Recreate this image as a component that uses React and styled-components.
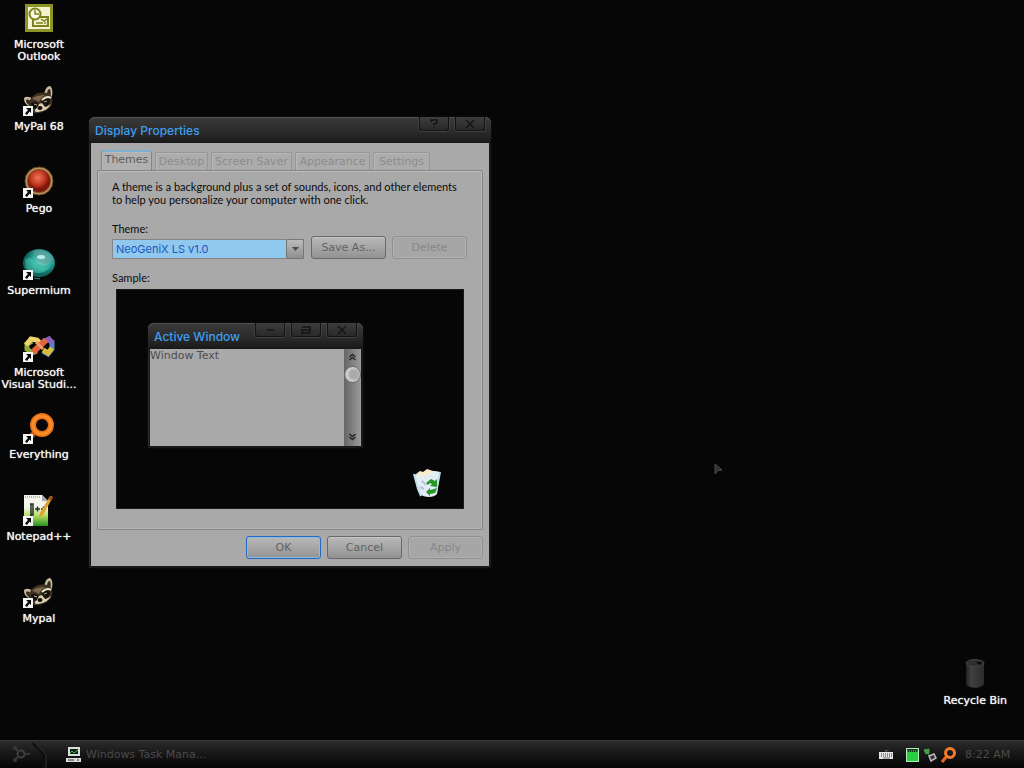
import React from "react";
import styled, { createGlobalStyle, css } from "styled-components";

const uiFont = `Inter, "DejaVu Sans", sans-serif`;
const wideFont = `"DejaVu Sans", Inter, sans-serif`;
const bodyFont = `Lato, Roboto, sans-serif`;

const Global = createGlobalStyle`
  *, *::before, *::after { box-sizing: border-box; }
  body { margin: 0; background: #060606; }
  button, select { margin: 0; font: inherit; }
  svg { display: block; }
`;

const Desktop = styled.div`
  position: relative;
  min-height: 100vh;
  display: flex;
  flex-direction: column;
  background: #060606;
  font-family: ${uiFont};
  overflow: hidden;
  cursor: default;
`;

const Workspace = styled.main`
  flex: 1;
  display: flex;
  justify-content: space-between;
  align-items: flex-end;
`;

const Shortcuts = styled.nav`
  align-self: flex-start;
  width: 78px;
  padding-top: 2px;
`;

const ShortcutLink = styled.a`
  display: flex;
  flex-direction: column;
  align-items: center;
  gap: 5px;
  height: ${(p) => (p.$last ? "auto" : "82px")};
  color: #f6f6f6;
  text-decoration: none;
  font-family: ${wideFont};
  font-size: 11px;
  line-height: 12px;
  text-align: center;
  text-shadow: 0 0 1px #f6f6f6;
  white-space: pre;
`;

const BinArea = styled.aside`
  padding: 0 17px 33px 0;
`;

/* ---- windows ---- */

const Frame = styled.section`
  position: absolute;
  left: ${(p) => p.$x}px;
  top: ${(p) => p.$y}px;
  width: ${(p) => p.$w}px;
  padding: 0 2px 2px;
  background: #191919;
  border-radius: 6px 6px 2px 2px;
  box-shadow: inset 0 1px #4c4c4c, inset 1px 0 #2b2b2b, 0 0 3px #161616;
`;

const TitleBar = styled.header`
  display: flex;
  justify-content: space-between;
  height: 26px;
  margin: 0 -2px;
  padding: 0 6px;
  border-radius: 6px 6px 0 0;
  background: linear-gradient(#3a3a3a, #2b2b2b 55%, #191919);
  box-shadow: inset 0 1px #505050;
`;

const Title = styled.h2`
  margin: 0;
  color: #3f9fee;
  font-family: ${uiFont};
  font-size: 12px;
  font-weight: 500;
  line-height: 28px;
  white-space: nowrap;
`;

const CaptionButtons = styled.div`
  display: flex;
  gap: 6px;
`;

const CaptionButton = styled.button`
  display: grid;
  place-items: center;
  width: 30px;
  height: 14px;
  padding: 0;
  border: 1px solid #121212;
  border-top: 0;
  border-radius: 0 0 3px 3px;
  background: linear-gradient(#3d3d3d, #292929);
  box-shadow: 0 1px #444, -1px 0 #414141, 1px 0 #414141;
`;

const Body = styled.div`
  padding: 7px 6px 7px;
  background: #a9a9a9;
`;

const Tabs = styled.div`
  display: flex;
  align-items: flex-end;
  gap: 3px;
  height: 20px;
  padding-left: 4px;
`;

const Tab = styled.button`
  width: ${(p) => p.$w}px;
  height: 18px;
  padding: 0;
  border: 1px solid #979797;
  border-bottom: 0;
  border-radius: 2px 2px 0 0;
  background: #acacac;
  box-shadow: inset 1px 1px #b8b8b8;
  color: #8c8c8c;
  font-family: ${wideFont};
  font-size: 11px;
  line-height: 16px;
  white-space: nowrap;
  ${(p) =>
    p.$active &&
    css`
      height: 20px;
      padding-bottom: 2px;
      border-color: #858585;
      border-top: 2px solid #7fb0d4;
      background: #b1b1b1;
      color: #5e5e5e;
    `}
`;

const Panel = styled.div`
  display: flex;
  flex-direction: column;
  padding: 9px 14px 20px;
  border: 1px solid #858585;
  border-radius: 2px;
  box-shadow: inset 1px 1px #bdbdbd, inset -1px -1px #b6b6b6;
  color: #0b0b0b;
  font-family: ${bodyFont};
  font-size: 11px;
  line-height: 13px;
`;

const Intro = styled.p`
  margin: 0 0 16px;
`;

const FieldLabel = styled.label`
  display: block;
  margin-bottom: 1px;
`;

const ThemeRow = styled.div`
  display: flex;
  align-items: flex-start;
  gap: 6px;
  margin-bottom: 12px;
`;

const SelectBox = styled.div`
  position: relative;
  width: 193px;
  height: 20px;
  margin-top: 3px;
`;

const Select = styled.select`
  appearance: none;
  width: 192px;
  height: 20px;
  padding: 0 20px 0 3px;
  border: 1px solid #858585;
  border-radius: 0;
  background: linear-gradient(90deg, #91c8ee 173px, #a9a9a9 173px);
  color: #1857c4;
  font-family: ${uiFont};
  font-size: 11px;
  line-height: 18px;
`;

const SelectArrow = styled.span`
  position: absolute;
  top: 0;
  right: 1px;
  display: grid;
  place-items: center;
  width: 18px;
  height: 20px;
  border: 1px solid #777;
  border-radius: 2px;
  background: linear-gradient(#bcbcbc, #8f8f8f);
  pointer-events: none;
`;

const Button = styled.button`
  width: 75px;
  height: 23px;
  padding: 0;
  border: 1px solid #696969;
  border-radius: 3px;
  background: linear-gradient(#b8b8b8, #a4a4a4 55%, #929292);
  box-shadow: inset 0 1px #c6c6c6;
  color: #626262;
  font-family: ${wideFont};
  font-size: 11px;
  line-height: 20px;
  ${(p) =>
    p.$primary &&
    css`
      border-color: #2468c4;
      box-shadow: inset 0 0 0 1px #8abbe3;
    `}
  &:disabled {
    border-color: #919191;
    background: #a6a6a6;
    box-shadow: inset 0 0 0 1px #b0b0b0;
    color: #868686;
  }
`;

const Preview = styled.div`
  position: relative;
  height: 220px;
  margin: 5px 4px 0;
  border: 1px solid #1b1b1b;
  background: #060606;
`;

const PreviewBin = styled.div`
  position: absolute;
  right: 20px;
  bottom: 9px;
`;

const PreviewBody = styled.div`
  display: flex;
  height: 97px;
  background: #a9a9a9;
`;

const PreviewText = styled.p`
  flex: 1;
  margin: 0;
  color: #4d4d4d;
  font-family: ${wideFont};
  font-size: 11px;
  line-height: 13px;
`;

const ScrollTrack = styled.div`
  display: flex;
  flex-direction: column;
  align-items: center;
  width: 17px;
  padding: 4px 0 5px;
  background: linear-gradient(90deg, #656565, #9b9b9b);
`;

const ScrollThumb = styled.span`
  width: 17px;
  height: 17px;
  margin: 5px 0 auto;
  border: 1px solid #6a6a6a;
  border-radius: 50%;
  background: radial-gradient(circle at 60% 50%, #aaa 35%, #d2d2d2 60%, #8b8b8b);
`;

const DialogActions = styled.footer`
  display: flex;
  justify-content: flex-end;
  gap: 6px;
  padding-top: 6px;
`;

/* ---- taskbar ---- */

const Taskbar = styled.footer`
  display: flex;
  align-items: stretch;
  height: 28px;
  border-top: 1px solid #3a3a3a;
  background: linear-gradient(#2b2b2b, #181818 45%, #050505);
  color: #4b4b4b;
  font-family: ${wideFont};
  font-size: 11px;
`;

const StartButton = styled.button`
  width: 47px;
  padding: 0;
  border: 0;
  background: transparent;
`;

const TaskButton = styled.button`
  display: flex;
  align-items: center;
  gap: 5px;
  margin-left: 19px;
  padding: 0;
  border: 0;
  background: transparent;
  color: inherit;
`;

const Tray = styled.div`
  display: flex;
  align-items: center;
  gap: 4px;
  margin-left: auto;
  padding-right: 12px;
`;

const Keyboard = styled.span`
  margin-right: 9px;
`;

const Clock = styled.time`
  min-width: 47px;
  margin-left: 5px;
  white-space: nowrap;
`;

const Pointer = styled.div`
  position: absolute;
  left: 714px;
  top: 463px;
`;

/* ---- drawings ---- */

const Badge = () => (
  <g>
    <path d="M0 22h10v10H0z" fill="#f5f5f5" />
    <path d="M3 24h5v5L6.500 27.500 4 31 2 29.500 5 26z" fill="#080808" />
  </g>
);

const Icon = ({ children, badge = true }) => (
  <svg width="32" height="32" viewBox="0 0 32 32" aria-hidden="true">
    {children}
    {badge && <Badge />}
  </svg>
);

const OutlookIcon = () => (
  <Icon badge={false}>
    <path d="M2 2h28v28H2z" fill="#8d9327" />
    <path d="M5 5h22v22H5z" fill="#f2f3d0" />
    <rect x="10" y="15" width="15" height="9" fill="#f2f3d0" stroke="#7c811b" strokeWidth="2" />
    <path d="M18 17l3 2 3-2M13 21h7M21 21h2" stroke="#7c811b" strokeWidth="1.500" fill="none" />
    <circle cx="12" cy="12" r="5.500" fill="#fbfbe8" stroke="#7c811b" strokeWidth="2" />
    <path d="M12 8v4h4" stroke="#7c811b" strokeWidth="1.500" fill="none" />
  </Icon>
);

const RaccoonIcon = () => (
  <Icon>
    <path d="M21 11c1-6 3-9 6-9 3 2 3 8 1 13z" fill="#c9b99f" />
    <path d="M24 10c0-3 1-5 3-5 1 2 1 5 0 8z" fill="#352820" />
    <path d="M1 15c0-3 5-3 9 0l-4 7c-3-1-5-4-5-7z" fill="#c9b99f" />
    <path d="M3 16c2-1 4 0 5 2l-2 3c-2-1-3-3-3-5z" fill="#3b2b20" />
    <path d="M6 18C9 10 16 7 25 9c5 3 5 9 3 13-4 5-11 8-17 7-3-2-6-6-5-11z" fill="#413224" />
    <path d="M9 15c3-3 8-4 13-4-3 2-5 4-6 7-3-2-5-3-7-3z" fill="#7d6a4e" />
    <path d="M8 19c3-2 7-1 8 2l-4 4c-3-1-4-3-4-6zM18 19c2-5 6-6 9-4 1 4-2 7-7 8z" fill="#15110d" />
    <path d="M16 20l3-1 3 4c2 0 4-2 6-3-3 6-9 8-15 8-2-1-1-3 1-4z" fill="#dccdb1" />
    <path d="M19 16c3-3 6-4 9-2" stroke="#eee1c8" strokeWidth="2" fill="none" />
    <path d="M11 20l3 1M21 18l3-1" stroke="#b9aa92" strokeWidth="1" />
    <ellipse cx="17" cy="24" rx="2.500" ry="2" fill="#120e0b" />
  </Icon>
);

const PegoIcon = () => (
  <Icon>
    <defs>
      <radialGradient id="pego" cx="45%" cy="35%">
        <stop offset="0" stopColor="#f0765b" />
        <stop offset="0.700" stopColor="#bd331d" />
        <stop offset="1" stopColor="#7c170c" />
      </radialGradient>
    </defs>
    <circle cx="16" cy="15" r="14" fill="#b8975f" stroke="#6b4321" />
    <circle cx="16" cy="15" r="12" fill="#8a4a24" />
    <circle cx="16" cy="15" r="11" fill="url(#pego)" />
  </Icon>
);

const SupermiumIcon = () => (
  <Icon>
    <defs>
      <radialGradient id="super" cx="60%" cy="40%">
        <stop offset="0" stopColor="#8be6d9" />
        <stop offset="0.600" stopColor="#30a99a" />
        <stop offset="1" stopColor="#0f665f" />
      </radialGradient>
    </defs>
    <ellipse cx="16" cy="15" rx="16" ry="14" fill="url(#super)" />
    <path d="M10 3c9-3 18 2 20 9-5 6-13 4-16 0z" fill="#5f9d9b" opacity=".7" />
    <path d="M2 12c4-4 8-2 11 4 4 5 10 4 14 2-5 9-17 9-24 2z" fill="#4fd0b5" opacity=".5" />
    <ellipse cx="18" cy="9" rx="4" ry="2" fill="#b5eee4" />
    <path d="M11 30l6 1" stroke="#3c8b80" />
  </Icon>
);

const VisualStudioIcon = () => (
  <Icon>
    <g fill="none" strokeWidth="5" transform="translate(0 3)">
      <path d="M9 8l-5 3v5l5 4 5-2" stroke="#90a83d" />
      <path d="M3 12l5-6 6 1 4 4" stroke="#efd36b" />
      <path d="M20 18l5 3 4-5V9l-5-3" stroke="#5a83cb" />
      <path d="M22 8l4-2 3 4" stroke="#8961b6" />
      <path d="M20 17l5 3 4-5" stroke="#d5bf3c" />
      <path d="M10 19L23 7" stroke="#e2653e" strokeWidth="6" />
      <path d="M13 9l7 7" stroke="#ee9a65" strokeWidth="3" />
    </g>
  </Icon>
);

const EverythingIcon = () => (
  <Icon>
    <path d="M12 20l-7 8" stroke="#c65308" strokeWidth="5" />
    <circle cx="19" cy="13" r="9" fill="none" stroke="#e66f17" strokeWidth="6" />
    <circle cx="19" cy="13" r="9" fill="none" stroke="#fb8c2a" strokeWidth="3" />
  </Icon>
);

const NotepadIcon = () => (
  <Icon>
    <defs>
      <linearGradient id="note" x2="0" y2="1">
        <stop offset="0.400" stopColor="#f5f5ef" />
        <stop offset="0.650" stopColor="#b9df65" />
        <stop offset="1" stopColor="#268f22" />
      </linearGradient>
    </defs>
    <path d="M1 1h18l6 6v25H1z" fill="url(#note)" />
    <path d="M19 1v6h6" fill="#aaa" />
    <path d="M2 3h16" stroke="#777" strokeDasharray="1 1" />
    <path d="M8 10v12M7 10h3v11H7" stroke="#252e22" strokeWidth="1.500" fill="none" />
    <path d="M12 15h5M14.500 12.500v5M18 15h5M20.500 12.500v5" stroke="#283323" strokeWidth="1.500" />
    <path d="M27 2l3 1-10 18-4 3 1-5z" fill="#dda333" />
    <path d="M27 2l3 1-2 4-3-2z" fill="#a34f29" />
  </Icon>
);

const DarkBinIcon = () => (
  <Icon badge={false}>
    <defs>
      <linearGradient id="dark-bin">
        <stop offset="0" stopColor="#222" />
        <stop offset="0.300" stopColor="#404040" />
        <stop offset="1" stopColor="#2b2b2b" />
      </linearGradient>
    </defs>
    <path d="M7 5v21c2 5 16 5 18 0V5z" fill="url(#dark-bin)" />
    <ellipse cx="16" cy="5" rx="9" ry="3.500" fill="#2e2e2e" stroke="#444" />
    <path d="M17 4h6l-2 3z" fill="#050505" />
  </Icon>
);

const WhiteBinIcon = () => (
  <Icon badge={false}>
    <path d="M5 7l4-3 3 1 4-3 6 2 6 1-3 8H7z" fill="#f9edce" />
    <path d="M3 7l8 2 6-1 6-4 6 1-3 22c-3 4-13 4-17 0z" fill="#e3edf6" />
    <path d="M3 7l4 15 3 7M29 5l-4 21" stroke="#c1dff0" strokeWidth="2" fill="none" />
    <path d="M11 14l4 4M9 20l4 2" stroke="#b9bfdc" strokeWidth="2" />
    <path d="M15 16l5-4 4 2 2-2v8l-7-1 2-2-2-1-2 2zM26 21l-2 5-5 1v2l-4-4 4-4v2l4-1z" fill="#279624" />
  </Icon>
);

const captionPaths = {
  help: "M7 4V2h6v3l-3 1v1M10 9v1",
  close: "M6 2l8 8M14 2l-8 8",
  minimize: "M7 6h7",
  maximize: "M6 3h8v6H6V6h8",
};

const Caption = ({ kind, label }) => (
  <CaptionButton type="button" aria-label={label}>
    <svg width="20" height="12" viewBox="0 0 20 12" aria-hidden="true">
      <path d={captionPaths[kind]} fill="none" stroke="#141414" strokeWidth="1.500" />
    </svg>
  </CaptionButton>
);

const Chevrons = ({ down }) => (
  <svg width="9" height="8" viewBox="0 0 9 8" aria-hidden="true">
    <path
      d={down ? "M1.500 1l3 2.500 3-2.500M1.500 4l3 2.500 3-2.500" : "M1.500 4l3-2.500 3 2.500M1.500 7l3-2.500 3 2.500"}
      fill="none"
      stroke="#252525"
      strokeWidth="1.500"
    />
  </svg>
);

const shortcuts = [
  { label: "Microsoft\nOutlook", Art: OutlookIcon },
  { label: "MyPal 68", Art: RaccoonIcon },
  { label: "Pego", Art: PegoIcon },
  { label: "Supermium", Art: SupermiumIcon },
  { label: "Microsoft\nVisual Studi...", Art: VisualStudioIcon },
  { label: "Everything", Art: EverythingIcon },
  { label: "Notepad++", Art: NotepadIcon },
  { label: "Mypal", Art: RaccoonIcon },
];

const tabs = [
  { label: "Themes", width: 51, active: true },
  { label: "Desktop", width: 53 },
  { label: "Screen Saver", width: 81 },
  { label: "Appearance", width: 75 },
  { label: "Settings", width: 57 },
];

const ActiveWindow = () => (
  <Frame $x={31} $y={33} $w={215}>
    <TitleBar>
      <Title>Active Window</Title>
      <CaptionButtons>
        <Caption kind="minimize" label="Minimize" />
        <Caption kind="maximize" label="Maximize" />
        <Caption kind="close" label="Close" />
      </CaptionButtons>
    </TitleBar>
    <PreviewBody>
      <PreviewText>Window Text</PreviewText>
      <ScrollTrack>
        <Chevrons />
        <ScrollThumb />
        <Chevrons down />
      </ScrollTrack>
    </PreviewBody>
  </Frame>
);

const DisplayProperties = () => (
  <Frame $x={89} $y={117} $w={402} role="dialog" aria-label="Display Properties">
    <TitleBar>
      <Title>Display Properties</Title>
      <CaptionButtons>
        <Caption kind="help" label="Help" />
        <Caption kind="close" label="Close" />
      </CaptionButtons>
    </TitleBar>
    <Body>
      <Tabs role="tablist">
        {tabs.map((t) => (
          <Tab key={t.label} type="button" role="tab" aria-selected={!!t.active} $w={t.width} $active={t.active}>
            {t.label}
          </Tab>
        ))}
      </Tabs>
      <Panel role="tabpanel">
        <Intro>
          A theme is a background plus a set of sounds, icons, and other elements
          <br />
          to help you personalize your computer with one click.
        </Intro>
        <FieldLabel htmlFor="theme">Theme:</FieldLabel>
        <ThemeRow>
          <SelectBox>
            <Select id="theme" defaultValue="neo">
              <option value="neo">NeoGeniX LS v1.0</option>
            </Select>
            <SelectArrow>
              <svg width="7" height="5" viewBox="0 0 7 5" aria-hidden="true">
                <path d="M0 0h7L3.500 4z" fill="#4b4b4b" />
              </svg>
            </SelectArrow>
          </SelectBox>
          <Button type="button">Save As...</Button>
          <Button type="button" disabled>Delete</Button>
        </ThemeRow>
        <div>Sample:</div>
        <Preview>
          <ActiveWindow />
          <PreviewBin><WhiteBinIcon /></PreviewBin>
        </Preview>
      </Panel>
      <DialogActions>
        <Button type="button" $primary>OK</Button>
        <Button type="button">Cancel</Button>
        <Button type="button" disabled>Apply</Button>
      </DialogActions>
    </Body>
  </Frame>
);

export default function App() {
  return (
    <Desktop>
      <Global />
      <Workspace>
        <Shortcuts aria-label="Desktop shortcuts">
          {shortcuts.map(({ label, Art }) => (
            <ShortcutLink key={label} href="#">
              <Art />
              <span>{label}</span>
            </ShortcutLink>
          ))}
        </Shortcuts>
        <BinArea>
          <ShortcutLink href="#" $last>
            <DarkBinIcon />
            <span>Recycle Bin</span>
          </ShortcutLink>
        </BinArea>
      </Workspace>
      <DisplayProperties />
      <Pointer>
        <svg width="10" height="14" viewBox="0 0 10 14" aria-hidden="true">
          <path d="M1 1l7 6-4 .5L1 11z" fill="#303030" stroke="#4c4c4c" />
        </svg>
      </Pointer>
      <Taskbar>
        <StartButton type="button" aria-label="Start">
          <svg width="47" height="27" viewBox="0 0 47 27" aria-hidden="true">
            <path d="M33 2l11 12v13" fill="none" stroke="#0d0d0d" strokeWidth="2" />
            <path d="M34 1l12 13v13" fill="none" stroke="#303030" />
            <circle cx="21" cy="13" r="3.500" fill="none" stroke="#3f3f3f" strokeWidth="2" />
            <circle cx="15" cy="7" r="2" fill="#383838" />
            <circle cx="15" cy="19" r="2" fill="#383838" />
            <path d="M15 7l4 4M15 19l4-4M25 13h5" stroke="#383838" strokeWidth="2" />
          </svg>
        </StartButton>
        <TaskButton type="button">
          <svg width="15" height="15" viewBox="0 0 15 15" aria-hidden="true">
            <path d="M2 0h12v9H2zM0 11h15v4H0z" fill="#d9ddd9" />
            <path d="M4 2h8v5H4z" fill="#07240d" />
            <path d="M4 6l2-2 2 2 4-3" stroke="#47b557" fill="none" />
            <path d="M2 13h6M11 13h2" stroke="#303030" />
          </svg>
          <span>Windows Task Mana...</span>
        </TaskButton>
        <Tray>
          <Keyboard>
            <svg width="14" height="9" viewBox="0 0 14 9" aria-hidden="true">
              <path d="M7 2V0h3" stroke="#777" fill="none" />
              <path d="M0 2h14v7H0z" fill="#e5e5e5" />
              <path d="M2 4h11M2 6h11" stroke="#333" strokeDasharray="1 1" />
              <path d="M4 8h7" stroke="#777" />
            </svg>
          </Keyboard>
          <svg width="13" height="14" viewBox="0 0 13 14" aria-hidden="true">
            <path d="M0 0h13v14H0z" fill="#b5eab9" />
            <path d="M1 1h11v3H1z" fill="#123d18" />
            <path d="M1 4h11v9H1z" fill="#29cf3f" />
            <path d="M1 3h11" stroke="#4cd75c" strokeDasharray="1 1" />
          </svg>
          <svg width="14" height="14" viewBox="0 0 14 14" aria-hidden="true">
            <path d="M1 2l5-1v4L3 6zM4 4l3 4" fill="#3e9d42" stroke="#4aa04d" />
            <path d="M6 8l5-2 2 4-5 3z" fill="#333" stroke="#bbb" strokeWidth="1.500" />
          </svg>
          <svg width="15" height="16" viewBox="0 0 15 16" aria-hidden="true">
            <path d="M6 9l-5 6" stroke="#e96b20" strokeWidth="3" />
            <circle cx="9" cy="6" r="4.500" fill="none" stroke="#f47b2c" strokeWidth="3" />
          </svg>
          <Clock dateTime="08:22">8:22 AM</Clock>
        </Tray>
      </Taskbar>
    </Desktop>
  );
}
